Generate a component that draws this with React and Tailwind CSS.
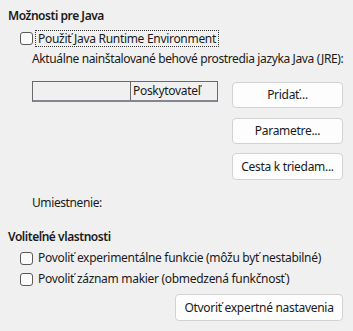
import React from "react";

function Box() {
  return (
    <span className="inline-block w-[13px] h-[13px] rounded-[3px] border border-[#5a5a5a] bg-[#fbfbfb] shrink-0" />
  );
}

function Btn({ children, className = "" }) {
  return (
    <div
      className={
        "flex items-center justify-center rounded-[4px] border border-[#d2d2d2] bg-[#fdfdfd] text-[#1a1a1a] " +
        className
      }
    >
      {children}
    </div>
  );
}

export default function App() {
  return (
    <div
      className="w-[353px] h-[331px] bg-[#f0f0f0] text-[#1a1a1a] text-[12px] leading-[16px] overflow-hidden"
      style={{ fontFamily: '"Noto Sans", "Open Sans", sans-serif' }}
    >
      <div className="pl-[8px] pt-[8px]">
        <div className="font-semibold h-[16px] tracking-[-0.45px]">Možnosti pre Java</div>
        <div className="mt-[6px] ml-[12px] flex items-center h-[16px]">
          <Box />
          <span className="ml-[2px] px-[2px] border border-dotted border-[#333] h-[17px] leading-[15px] tracking-[-0.3px] whitespace-nowrap">
            Použiť Java Runtime Environment
          </span>
        </div>
        <div className="mt-[5px] ml-[24px] h-[16px] tracking-[-0.37px] whitespace-nowrap">
          Aktuálne nainštalované behové prostredia jazyka Java (JRE):
        </div>
        <div className="mt-[14px] ml-[24px] flex">
          <div className="w-[186px] h-[21px] flex border-x border-t border-[#6a6a6a] border-b-2 border-b-[#85858f]">
            <div className="w-[98px] border-r border-[#6a6a6a]" />
            <div className="pl-[2px] leading-[18px] tracking-[-0.3px]">Poskytovateľ</div>
          </div>
          <div className="ml-[14px] mt-[1px] flex flex-col w-[111px]">
            <Btn className="h-[26px] tracking-[-0.3px]">Pridať...</Btn>
            <Btn className="h-[26px] mt-[10px] tracking-[-0.3px]">Parametre...</Btn>
            <Btn className="h-[27px] mt-[9px] tracking-[-0.3px]">Cesta k triedam...</Btn>
          </div>
        </div>
        <div className="mt-[15px] ml-[24px] h-[16px] tracking-[-0.4px]">Umiestnenie:</div>
        <div className="mt-[18px] font-semibold h-[16px] tracking-[-0.45px]">Voliteľné vlastnosti</div>
        <div className="mt-[5px] ml-[12px] flex items-center h-[16px] whitespace-nowrap">
          <Box />
          <span className="ml-[5px] tracking-[-0.3px]">Povoliť experimentálne funkcie (môžu byť nestabilné)</span>
        </div>
        <div className="mt-[5px] ml-[12px] flex items-center h-[16px] whitespace-nowrap">
          <Box />
          <span className="ml-[5px] tracking-[-0.3px]">Povoliť záznam makier (obmedzená funkčnosť)</span>
        </div>
        <div className="mt-[7px] flex justify-end pr-[10px]">
          <Btn className="h-[27px] w-[168px] tracking-[-0.3px]">Otvoriť expertné nastavenia</Btn>
        </div>
      </div>
    </div>
  );
}
